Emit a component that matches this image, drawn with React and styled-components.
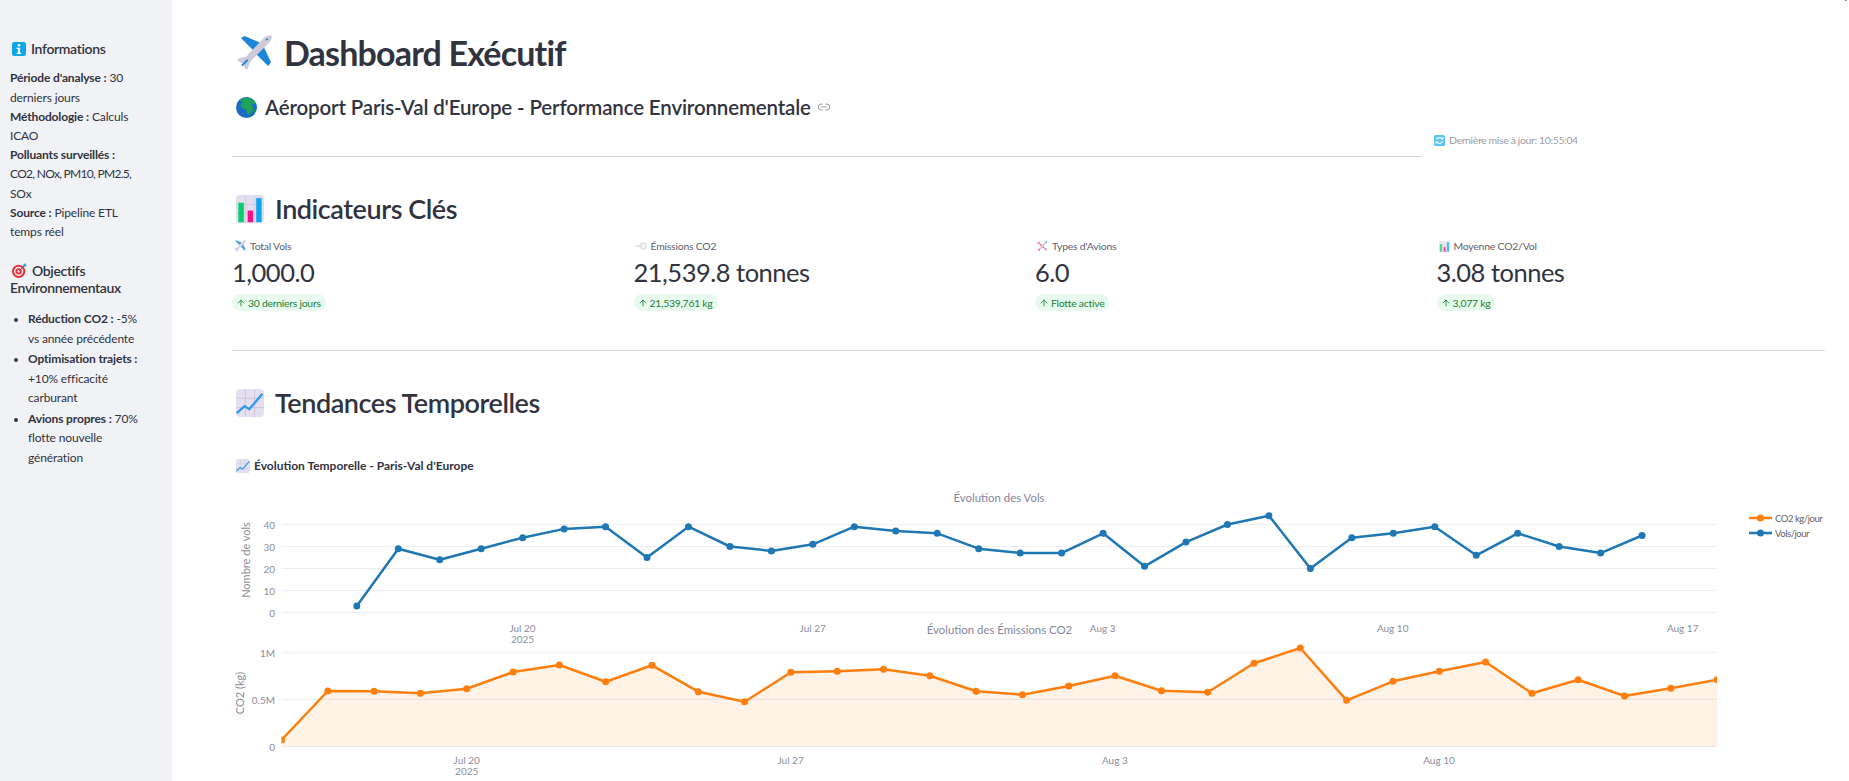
import React from "react";
import styled, { createGlobalStyle } from "styled-components";
import { ArrowUp, Link2 } from "lucide-react";

const Global = createGlobalStyle`
  html, body { margin: 0; padding: 0; height: 100%; overflow: hidden; background: #fff; }
  #root { height: 100%; }
  body { font-family: Lato, "Liberation Sans", sans-serif; color: #31333f; }
`;

const Page = styled.div`
  position: relative;
  display: flex;
  width: 100%;
  height: 100%;
  overflow: hidden;
`;
const Sidebar = styled.aside`
  flex: 0 0 172px;
  box-sizing: border-box;
  height: 100%;
  padding: 39px 0 0 10px;
  background: #f0f2f6;
  font-size: 12px;
  letter-spacing: -0.14px;
`;
const SideHeading = styled.h3`
  margin: ${(p) => p.$top || 0}px 0 0;
  font-size: 14px;
  font-weight: 600;
  line-height: ${(p) => p.$lh || 20}px;
  letter-spacing: -0.35px;
  white-space: nowrap;
  svg { vertical-align: -2px; margin: 0 5px 0 2px; }
`;
const SideText = styled.p`
  margin: 9.4px 0 0;
  line-height: 19.2px;
  white-space: nowrap;
  b { font-weight: 700; }
`;
const TightLine = styled.span`
  letter-spacing: -0.7px;
`;
const SideList = styled.ul`
  margin: 13.2px 0 0;
  padding: 0 0 0 18px;
  line-height: 19.4px;
  white-space: nowrap;
  li { margin-bottom: 1.2px; }
  li::marker { font-size: 11px; }
  b { font-weight: 700; }
`;
const Main = styled.main`
  flex: 1;
  min-width: 0;
  box-sizing: border-box;
  padding: 30px 24px 0 60px;
`;
const HeaderRow = styled.div`
  display: flex;
  gap: 13px;
`;
const HeaderMain = styled.div`
  flex: 0 0 1189px;
`;
const UpdateNote = styled.div`
  margin-top: 103px;
  height: 14px;
  display: flex;
  align-items: center;
  gap: 4px;
  font-size: 10.4px;
  line-height: 14px;
  letter-spacing: -0.33px;
  color: #9a9ba3;
  white-space: nowrap;
`;
const Title = styled.h1`
  margin: 0;
  height: 44px;
  display: flex;
  align-items: center;
  font-size: 34px;
  line-height: 44px;
  font-weight: 700;
  letter-spacing: -0.82px;
  gap: 12px;
  padding-left: 5px;
`;
const TitleText = styled.span`
  padding-top: 2px;
`;
const Subtitle = styled.h2`
  margin: 19px 0 0;
  display: flex;
  align-items: center;
  gap: 8px;
  font-size: 20.5px;
  line-height: 28px;
  font-weight: 600;
  letter-spacing: -0.15px;
  padding-left: 4px;
`;
const LinkMark = styled.span`
  display: inline-flex;
  margin-left: -2px;
  color: #85868f;
`;
const Rule = styled.hr`
  margin: ${(p) => p.$top}px 0 0;
  border: 0;
  height: 1px;
  background: #d4d5d9;
`;
const SectionHeading = styled.h2`
  margin: ${(p) => p.$top}px 0 0;
  display: flex;
  align-items: center;
  gap: 11px;
  padding-left: 4px;
  font-size: 27px;
  line-height: 35px;
  font-weight: 600;
  letter-spacing: -0.45px;
`;
const MetricGrid = styled.div`
  margin-top: 13px;
  display: grid;
  grid-template-columns: repeat(4, 401.5px);
`;
const Metric = styled.div`
  display: flex;
  flex-direction: column;
  align-items: flex-start;
`;
const MetricLabel = styled.div`
  display: flex;
  align-items: center;
  gap: 4px;
  height: 14px;
  padding-left: 2px;
  font-size: 10.4px;
  line-height: 14px;
  letter-spacing: -0.2px;
  color: #5f606b;
  svg { opacity: 0.75; }
`;
const MetricValue = styled.div`
  margin-top: 1px;
  font-size: 25.5px;
  line-height: 36px;
  font-weight: 400;
  letter-spacing: -0.5px;
`;
const Delta = styled.div`
  margin-top: 4px;
  height: 17px;
  display: inline-flex;
  align-items: center;
  gap: 2px;
  padding: 0 5px 0 4px;
  border-radius: 9px;
  background: rgba(33, 195, 84, 0.1);
  color: #158237;
  font-size: 10.4px;
  letter-spacing: -0.25px;
`;
const ChartHeading = styled.h4`
  margin: 38px 0 0;
  display: flex;
  align-items: center;
  gap: 4px;
  padding-left: 4px;
  font-size: 12px;
  line-height: 16px;
  font-weight: 700;
`;
const ChartSvg = styled.svg`
  display: block;
  margin-top: 6px;
  overflow: visible;
  text {
    font-family: Lato, "Liberation Sans", sans-serif;
  }
`;
const Tick = styled.text`
  font-size: 10px;
  fill: #8c8d98;
`;
const AxisTitle = styled.text`
  font-size: 11px;
  fill: #8c8d98;
`;
const PlotTitle = styled.text`
  font-size: 11.4px;
  fill: #85869a;
`;
const LegendText = styled.text`
  font-size: 9.5px;
  letter-spacing: -0.45px;
  fill: #5f606b;
`;
const ToolbarGhost = styled.div`
  position: absolute;
  top: -12px;
  left: 1829px;
  font-size: 12px;
  line-height: 14px;
  white-space: nowrap;
`;

const Plane = ({ size = 35, wing = "#1c86d8", body = "#cfcadb" }) => (
  <svg width={size} height={size} viewBox="0 0 36 36">
    <path d="M4 3 8 1 26 9 18 17Z" fill={wing} />
    <path d="M27 11 35 28 32 32 19 19Z" fill={wing} />
    <path d="M27 3.5C30 1 34.5-.2 35.6.6 36.5 2 35 6 32.5 8.5L14 27 10.5 35.5 8.6 35 6.5 29.5 0.5 26.5 1 24.5 9.5 22Z" fill={body} />
    <path d="M5 31.5 11 25.5" stroke={wing} strokeWidth="2" />
    <path d="M29.5 5 32 4" stroke={wing} strokeWidth="1.2" />
  </svg>
);
const Globe = () => (
  <svg width="21" height="21" viewBox="0 0 36 36">
    <circle cx="18" cy="18" r="18" fill="#1a6cc2" />
    <path d="M7 5C10 3 16 1 22 1.500 25 2.500 30 4 32 7L33 12 28 11 26 14C29 15 31 18 28 23 26 27 23 31 20 31 18 28 19 24 17 21 12 21 7 18 8 13L12 9 8 8Z" fill="#1fa25a" />
    <path d="M30 24 32 21 33 24 31 29Z" fill="#1fa25a" />
  </svg>
);
const BarsEmoji = ({ size = 28 }) => (
  <svg width={size} height={size} viewBox="0 0 36 36">
    <rect width="36" height="36" rx="5" fill="#e2deee" />
    <path d="M12 0V36M24 0V36M0 12H36M0 24H36" stroke="#cfc9e0" strokeWidth="1" />
    <rect x="3" y="10" width="7" height="25" fill="#05ce6c" />
    <rect x="15" y="20" width="7" height="15" fill="#f5108c" />
    <rect x="26" y="4" width="7" height="31" fill="#0ea5ea" />
  </svg>
);
const TrendEmoji = ({ size = 28 }) => (
  <svg width={size} height={size} viewBox="0 0 36 36">
    <rect width="36" height="36" rx="5" fill="#e4e0ef" />
    <path d="M12 0V36M24 0V36M0 12H36M0 24H36" stroke="#c6bfd9" strokeWidth="1" />
    <path d="M1 31 11 22 17 26 34 6" fill="none" stroke="#2e9bea" strokeWidth="3" />
  </svg>
);
const InfoEmoji = () => (
  <svg width="14" height="14" viewBox="0 0 36 36">
    <rect width="36" height="36" rx="6" fill="#0da5ee" />
    <circle cx="18" cy="8.500" r="3.500" fill="#fff" />
    <path d="M12 15H21V28H24V31H12V28H15V18H12Z" fill="#fff" />
  </svg>
);
const TargetEmoji = () => (
  <svg width="15" height="15" viewBox="0 0 36 36">
    <circle cx="16" cy="20" r="16" fill="#e8343c" />
    <circle cx="16" cy="20" r="11" fill="#fbeeee" />
    <circle cx="16" cy="20" r="7.500" fill="#e8343c" />
    <circle cx="16" cy="20" r="3" fill="#fbeeee" />
    <path d="M16 20 30 6" stroke="#395c73" strokeWidth="2" />
    <path d="M27 4 32 0 33 4 36 5 32 9 27 9Z" fill="#2aa2e8" />
  </svg>
);
const RefreshEmoji = () => (
  <svg width="11" height="11" viewBox="0 0 36 36">
    <rect width="36" height="36" rx="5" fill="#5cc4f6" />
    <path d="M8 15C10 8 20 6 26 12M28 21C26 28 16 30 10 24" fill="none" stroke="#fff" strokeWidth="4" />
    <path d="M22 15H31V6ZM14 21H5V30Z" fill="#fff" />
  </svg>
);
const PuffEmoji = () => (
  <svg width="11" height="12" viewBox="0 0 36 36">
    <circle cx="24" cy="18" r="12" fill="#d9d9dc" />
    <circle cx="25" cy="18" r="7" fill="#f1f1f2" />
    <path d="M0 18H14" stroke="#cfd0d3" strokeWidth="5" />
  </svg>
);
const CrossPlane = () => (
  <svg width="11" height="12" viewBox="0 0 36 36">
    <path d="M3 6 32 32" stroke="#f0396f" strokeWidth="6" strokeDasharray="7 3" />
    <path d="M32 4 4 33" stroke="#c9b9d8" strokeWidth="6" />
    <path d="M27 3 33 2 32 10Z" fill="#29a0e0" />
    <path d="M2 30 8 26 9 35Z" fill="#f0396f" />
  </svg>
);

const flights = [3, 29, 24, 29, 34, 38, 39, 25, 39, 30, 28, 31, 39, 37, 36, 29, 27, 27, 36, 21, 32, 40, 44, 20, 34, 36, 39, 26, 36, 30, 27, 35];
const co2Y = [780, 633, 634, 640, 626, 576, 555, 605, 556, 635, 665, 577, 574, 568, 587, 634, 644, 618, 587, 632, 637, 550, 504, 661, 604, 574, 546, 640, 599, 648, 625, 599];
const PLOT_L = 281.5;
const PLOT_R = 1717;
const fx = (i) => 356.8 + i * 41.46;
const fy = (v) => 612.5 - v * 2.2;
const cx = (i) => PLOT_L + i * 46.31;
const cy = (v) => 480 + v / 3;
const flightPts = flights.map((v, i) => [fx(i), fy(v)]);
const co2Pts = co2Y.map((v, i) => [cx(i), cy(v)]);
const toLine = (pts) => pts.map((p) => p.map((n) => n.toFixed(1)).join(",")).join(" ");

const Series = ({ pts, color }) => (
  <>
    <polyline points={toLine(pts)} fill="none" stroke={color} strokeWidth="2.5" strokeLinejoin="round" />
    {pts.map(([x, y]) => (
      <circle key={x} cx={x} cy={y} r="3.500" fill={color} />
    ))}
  </>
);
const DateTicks = ({ y, xs }) => (
  <>
    {xs.map(([label, x]) => (
      <Tick key={label} x={x} y={y} textAnchor="middle" dominantBaseline="central">{label}</Tick>
    ))}
    <Tick x={xs[0][1]} y={y + 11} textAnchor="middle" dominantBaseline="central">2025</Tick>
  </>
);

const Chart = () => (
  <ChartSvg width="1593" height="301" viewBox="232 480 1593 301">
    <defs>
      <clipPath id="co2clip">
        <rect x={PLOT_L} y="640" width={PLOT_R - PLOT_L} height="107" />
      </clipPath>
    </defs>
    <PlotTitle x="999" y="497" textAnchor="middle" dominantBaseline="central">Évolution des Vols</PlotTitle>
    <PlotTitle x="999.500" y="629" textAnchor="middle" dominantBaseline="central">Évolution des Émissions CO2</PlotTitle>

    {[0, 10, 20, 30, 40].map((v) => (
      <g key={v}>
        <line x1={PLOT_L} x2={PLOT_R} y1={fy(v)} y2={fy(v)} stroke="#ebedf4" />
        <Tick x="275" y={fy(v)} textAnchor="end" dominantBaseline="central">{v}</Tick>
      </g>
    ))}
    <AxisTitle transform="translate(245 560) rotate(-90)" textAnchor="middle" dominantBaseline="central">Nombre de vols</AxisTitle>
    <DateTicks y={628} xs={[["Jul 20", 522.5], ["Jul 27", 812.7], ["Aug 3", 1102.7], ["Aug 10", 1392.7], ["Aug 17", 1682.7]]} />
    <Series pts={flightPts} color="#1f77b4" />

    {[["0", 746.5], ["0.5M", 699.3], ["1M", 652.3]].map(([l, y]) => (
      <g key={l}>
        <line x1={PLOT_L} x2={PLOT_R} y1={y} y2={y} stroke="#ebedf4" />
        <Tick x="275" y={y + 0.5} textAnchor="end" dominantBaseline="central">{l}</Tick>
      </g>
    ))}
    <AxisTitle transform="translate(239 693) rotate(-90)" textAnchor="middle" dominantBaseline="central">CO2 (kg)</AxisTitle>
    <DateTicks y={760} xs={[["Jul 20", 466.7], ["Jul 27", 790.6], ["Aug 3", 1114.8], ["Aug 10", 1439]]} />
    <g clipPath="url(#co2clip)">
      <polygon points={`${PLOT_L},746.5 ${toLine(co2Pts)} ${co2Pts[31][0]},746.5`} fill="rgba(255,127,14,0.1)" />
      <Series pts={co2Pts} color="#ff7f0e" />
    </g>

    <line x1="1749" x2="1772" y1="518" y2="518" stroke="#ff7f0e" strokeWidth="2.5" />
    <circle cx="1760.500" cy="518" r="3.500" fill="#ff7f0e" />
    <LegendText x="1775" y="518" dominantBaseline="central">CO2 kg/jour</LegendText>
    <line x1="1749" x2="1772" y1="533" y2="533" stroke="#1f77b4" strokeWidth="2.5" />
    <circle cx="1760.500" cy="533" r="3.500" fill="#1f77b4" />
    <LegendText x="1775" y="533" dominantBaseline="central">Vols/jour</LegendText>
  </ChartSvg>
);

const metrics = [
  { icon: <Plane size={12} />, label: "Total Vols", value: "1,000.0", delta: "30 derniers jours" },
  { icon: <PuffEmoji />, label: "Émissions CO2", value: "21,539.8 tonnes", delta: "21,539,761 kg" },
  { icon: <CrossPlane />, label: "Types d'Avions", value: "6.0", delta: "Flotte active" },
  { icon: <BarsEmoji size={11} />, label: "Moyenne CO2/Vol", value: "3.08 tonnes", delta: "3,077 kg" },
];

export default function App() {
  return (
    <Page>
      <Global />
      <Sidebar>
        <SideHeading><InfoEmoji />Informations</SideHeading>
        <SideText>
          <b>Période d'analyse :</b> 30<br />derniers jours<br />
          <b>Méthodologie :</b> Calculs<br />ICAO<br />
          <b>Polluants surveillés :</b><br /><TightLine>CO2, NOx, PM10, PM2.5,</TightLine><br />SOx<br />
          <b>Source :</b> Pipeline ETL<br />temps réel
        </SideText>
        <SideHeading $top={22} $lh={16.5}><TargetEmoji />Objectifs<br />Environnementaux</SideHeading>
        <SideList>
          <li><b>Réduction CO2 :</b> -5%<br />vs année précédente</li>
          <li><b>Optimisation trajets :</b><br />+10% efficacité<br />carburant</li>
          <li><b>Avions propres :</b> 70%<br />flotte nouvelle<br />génération</li>
        </SideList>
      </Sidebar>
      <Main>
        <HeaderRow>
          <HeaderMain>
            <Title><Plane /><TitleText>Dashboard Exécutif</TitleText></Title>
            <Subtitle>
              <Globe />Aéroport Paris-Val d'Europe - Performance Environnementale
              <LinkMark><Link2 size={14} strokeWidth={1.5} /></LinkMark>
            </Subtitle>
            <Rule $top={35} />
          </HeaderMain>
          <UpdateNote><RefreshEmoji />Dernière mise à jour: 10:55:04</UpdateNote>
        </HeaderRow>
        <SectionHeading $top={34}><BarsEmoji />Indicateurs Clés</SectionHeading>
        <MetricGrid>
          {metrics.map((m) => (
            <Metric key={m.label}>
              <MetricLabel>{m.icon}{m.label}</MetricLabel>
              <MetricValue>{m.value}</MetricValue>
              <Delta><ArrowUp size={10} strokeWidth={2} />{m.delta}</Delta>
            </Metric>
          ))}
        </MetricGrid>
        <Rule $top={39} />
        <SectionHeading $top={34}><TrendEmoji />Tendances Temporelles</SectionHeading>
        <ChartHeading><TrendEmoji size={14} />Évolution Temporelle - Paris-Val d'Europe</ChartHeading>
        <Chart />
      </Main>
      <ToolbarGhost>Deploy</ToolbarGhost>
    </Page>
  );
}
